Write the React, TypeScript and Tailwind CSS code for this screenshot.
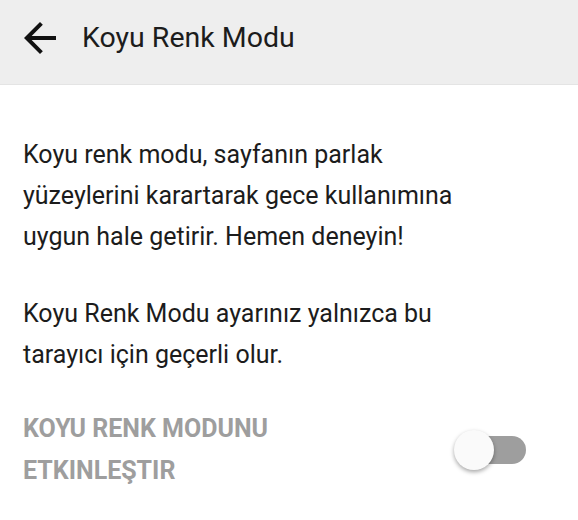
import React, { useState } from 'react'

const App = () => {
  const [on, setOn] = useState(false)

  return (
    <div className="w-[578px] h-[520px] bg-white overflow-hidden font-['Roboto',sans-serif]">
      <div className="h-[85px] bg-[#eeeeee] border-b border-[#e4e4e4] pt-[14px] flex items-start">
        <button className="ml-[16px] w-[48px] h-[48px] flex items-center justify-center text-[#111]">
          <svg width="48" height="48" viewBox="0 0 24 24" fill="currentColor">
            <path d="M20 11H7.83l5.59-5.59L12 4l-8 8 8 8 1.41-1.41L7.83 13H20v-2z" />
          </svg>
        </button>
        <h1 className="ml-[18px] text-[28.5px] leading-[48px] text-[#1c1c1c] font-normal">Koyu Renk Modu</h1>
      </div>

      <div className="pl-[23px] pr-[52px] pt-[49px]">
        <p className="w-[470px] text-[25px] leading-[41px] text-[#1c1c1c]">
          Koyu renk modu, sayfanın parlak yüzeylerini karartarak gece kullanımına uygun hale getirir. Hemen deneyin!
        </p>
        <p className="w-[470px] mt-[36px] text-[25px] leading-[41px] text-[#1c1c1c]">
          Koyu Renk Modu ayarınız yalnızca bu tarayıcı için geçerli olur.
        </p>

        <div className="mt-[33px] flex items-center justify-between">
          <span className="w-[300px] text-[25px] leading-[42px] font-bold uppercase text-[#9e9e9e]">
            KOYU RENK MODUNU ETKINLEŞTIR
          </span>
          <button
            onClick={() => setOn(!on)}
            className="relative w-[72px] h-[40px] flex items-center"
          >
            <span className="ml-[4px] w-[68px] h-[28px] rounded-full bg-[#9e9e9e]" />
            <span
              className={
                on
                  ? 'absolute left-[32px] top-0 w-[40px] h-[40px] rounded-full bg-[#fafafa] shadow-[0_2px_4px_rgba(0,0,0,0.35)]'
                  : 'absolute left-0 top-0 w-[40px] h-[40px] rounded-full bg-[#fafafa] shadow-[0_2px_4px_rgba(0,0,0,0.35)]'
              }
            />
          </button>
        </div>
      </div>
    </div>
  )
}

export default App
